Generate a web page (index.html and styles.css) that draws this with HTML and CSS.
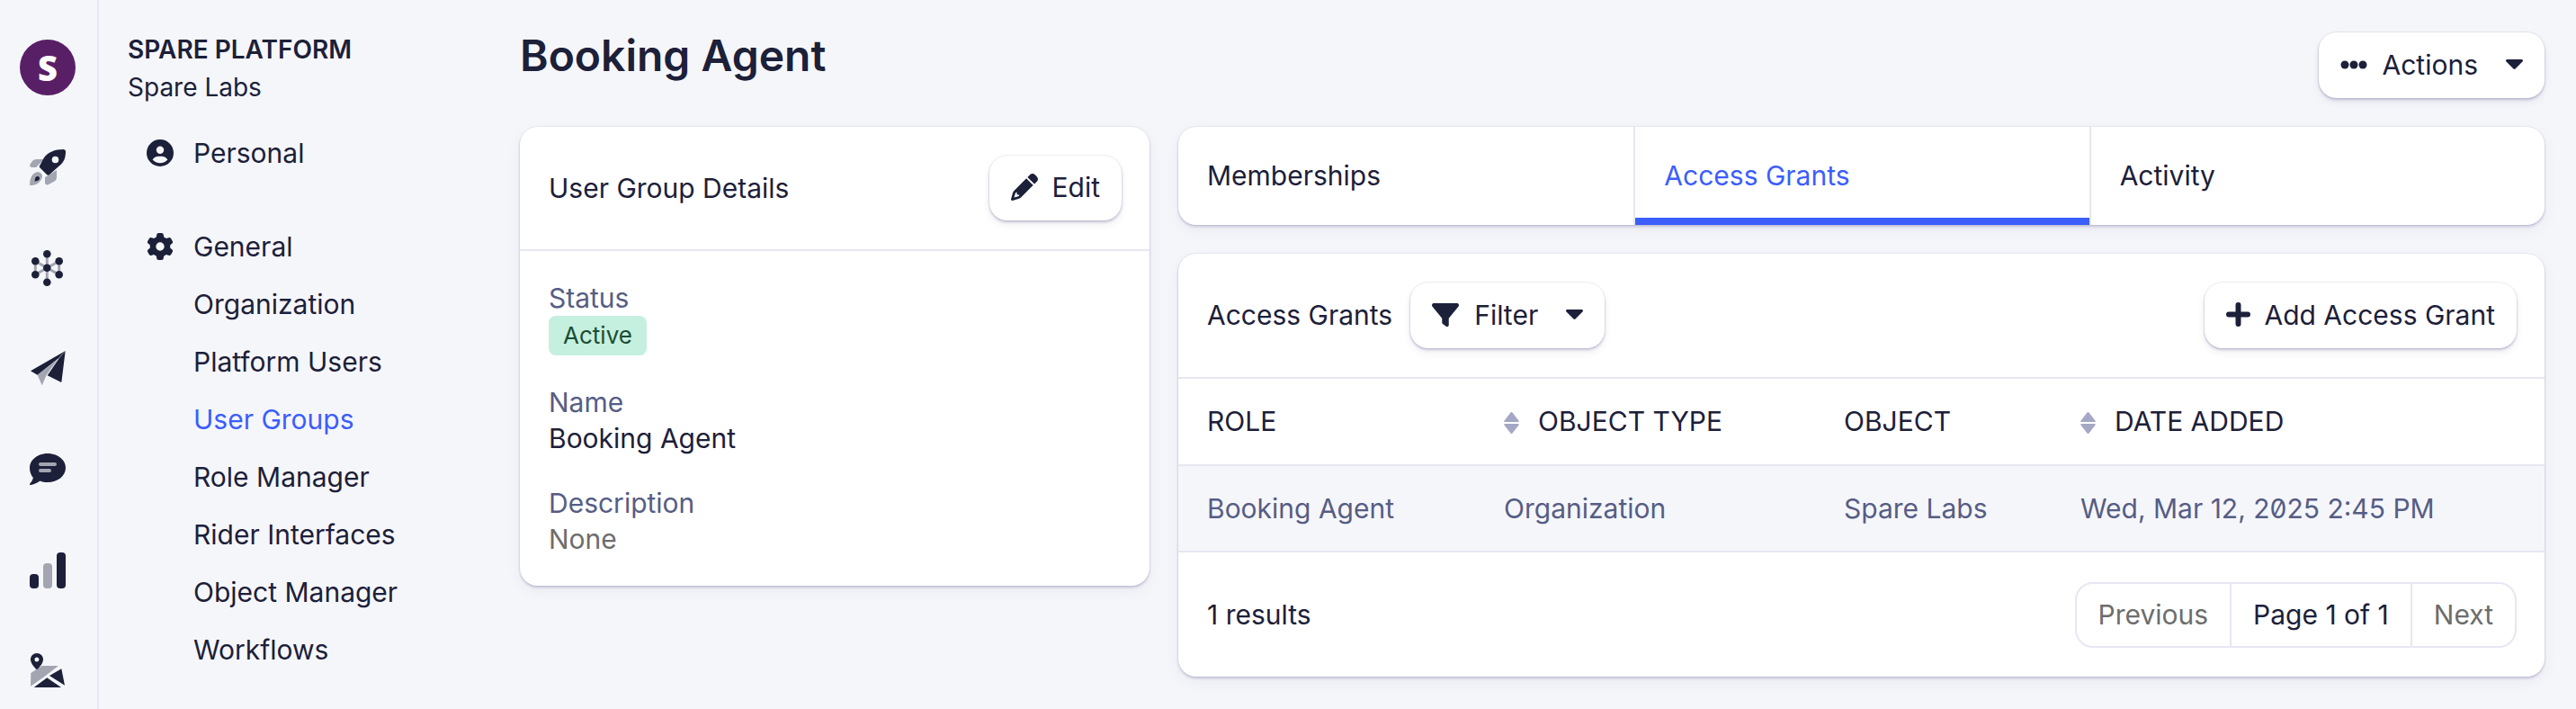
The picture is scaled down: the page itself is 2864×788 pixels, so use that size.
FILE: index.html
```html
<!DOCTYPE html>
<html lang="en">
<head>
    <meta charset="UTF-8">
    <meta name="viewport" content="width=device-width, initial-scale=1.0">
    <title>Booking Agent</title>
    <link rel="stylesheet" href="styles.css">
</head>
<body>
    <nav class="rail">
        <div class="logo">S</div>
        <svg class="rail-icon" viewBox="0 0 40 40">
            <path class="duo" d="M8 11h8L7 20H2.500C.5 20-.5 18 .5 16.500L3 13c1-1.300 3-2 5-2zM30 23v8c0 2-1 3.500-2.500 4.500L21 39c-2 1-4 0-4-2v-6z"/>
            <path class="duo" d="M7 25.500c2-.5 4-.5 5.500 1s2 3.500 1 5.500c-1 3-3 5-5.500 6.500C5.500 39.500 2.500 40 1 40c-.6 0-1-.4-1-1 0-3 .5-5 1.500-7.500 1-3 3-5 5.500-6z"/>
            <path d="M7.200 30.500c1-.6 2.500-.6 3.300.3s.8 2-.1 3c-1 1-2.600 1.500-4.700 2 0-2 .3-4 1.500-5.300z"/>
            <path d="M37.500 0C39 0 40 1 40 2.500c0 5-1 10-5 14L22 28c-1 1-2 1-3 0l-7.500-7.500c-1-1-1-2 0-3L15.500 10C20 3 28 0 37.500 0z"/>
            <circle class="hole" cx="28.500" cy="11.500" r="3.800"/>
        </svg>
        <svg class="rail-icon" viewBox="0 0 40 40">
            <path class="duo-line" d="M19.300 4.300v31.400M6.300 12.300v15M32.700 12.300v15M6.300 12.300l13 7.400 13.400-7.400M6.300 27.300l13-7.600 13.400 7.600"/>
            <circle cx="19.300" cy="4.300" r="4.300"/>
            <circle cx="6.300" cy="12.300" r="4.300"/>
            <circle cx="32.700" cy="12.300" r="4.300"/>
            <circle cx="19.300" cy="19.700" r="4.300"/>
            <circle cx="6.300" cy="27.300" r="4.300"/>
            <circle cx="32.700" cy="27.300" r="4.300"/>
            <circle cx="19.300" cy="35.700" r="4.300"/>
        </svg>
        <svg class="rail-icon" viewBox="0 0 40 40">
            <path d="M39.700 0L1 22.300l7.700 4.400L32 8.300z"/>
            <path class="duo" d="M8.700 26.700L32 8.300 18.700 26.700 13.700 38.300z"/>
            <path d="M32.700 8.300L39.700 0 35.300 35 19.700 27.300z"/>
        </svg>
        <svg class="rail-icon" viewBox="0 0 40 40">
            <path d="M20 2c11 0 20 7 20 16s-9 16-20 16c-3 0-6-.5-8.500-1.600C8 35 4 36.500 1 37c-1 .2-1.300-.8-.7-1.400 1.700-2 3-4.200 3.600-6.600C1.500 26.200 0 22.300 0 18 0 9 9 2 20 2z"/>
            <path class="duo-bar" d="M12 14h16M12 21h10"/>
        </svg>
        <svg class="rail-icon" viewBox="0 0 40 40">
            <rect width="10" height="16" y="24" rx="4"/>
            <rect class="duo" x="15" width="10" height="28" y="12" rx="4"/>
            <rect x="30" width="10" height="40" rx="4"/>
        </svg>
        <svg class="rail-icon" viewBox="0 0 40 40">
            <path class="duo" d="M13.700 14H32L15 27 1 36.700 1.300 22z"/>
            <path d="M35.300 17.300L39 35.700 22 25z"/>
            <path d="M19.300 27.300L35 38H4.700z"/>
            <path fill-rule="evenodd" d="M8 0c4 0 7 3 7 7 0 3.500-3.500 8-6 10.500-.6.600-1.500.600-2 0C4.500 15 1 10.500 1 7c0-4 3-7 7-7zm0 4.500a2.500 2.500 0 1 0 0 5 2.500 2.500 0 0 0 0-5z"/>
        </svg>
    </nav>

    <aside class="sidenav">
        <div class="brand">SPARE PLATFORM</div>
        <div class="org">Spare Labs</div>
        <a class="nav-head nav-personal">
            <svg class="nav-icon" viewBox="0 0 512 512"><path d="M399 384.200C376.900 345.800 335.400 320 288 320H224c-47.400 0-88.900 25.800-111 64.200c35.200 39.200 86.200 63.800 143 63.800s107.800-24.700 143-63.800zM0 256a256 256 0 1 1 512 0A256 256 0 1 1 0 256zm256 16a72 72 0 1 0 0-144 72 72 0 1 0 0 144z"/></svg>
            Personal
        </a>
        <a class="nav-head nav-general">
            <svg class="nav-icon" viewBox="0 0 512 512"><path d="M495.900 166.600c3.200 8.700 .5 18.400-6.400 24.600l-43.300 39.400c1.100 8.300 1.700 16.800 1.700 25.400s-.6 17.100-1.700 25.400l43.300 39.400c6.900 6.200 9.600 15.900 6.400 24.600c-4.400 11.900-9.700 23.300-15.800 34.300l-4.700 8.100c-6.600 11-14 21.400-22.100 31.200c-5.900 7.200-15.700 9.600-24.500 6.800l-55.700-17.700c-13.400 10.300-28.200 18.900-44 25.400l-12.500 57.100c-2 9.100-9 16.300-18.200 17.800c-13.800 2.300-28 3.500-42.500 3.500s-28.700-1.200-42.500-3.500c-9.200-1.500-16.200-8.700-18.200-17.800l-12.500-57.100c-15.800-6.500-30.600-15.100-44-25.400L83.100 425.900c-8.800 2.800-18.600 .3-24.500-6.800c-8.100-9.800-15.500-20.200-22.100-31.200l-4.700-8.100c-6.100-11-11.400-22.400-15.800-34.300c-3.200-8.700-.5-18.400 6.400-24.600l43.300-39.400C64.600 273.100 64 264.600 64 256s.6-17.100 1.700-25.400L22.400 191.200c-6.900-6.200-9.600-15.900-6.400-24.600c4.400-11.900 9.700-23.300 15.800-34.300l4.700-8.100c6.600-11 14-21.400 22.100-31.200c5.900-7.200 15.700-9.600 24.500-6.800l55.700 17.700c13.400-10.300 28.200-18.900 44-25.400l12.500-57.100c2-9.100 9-16.300 18.200-17.800C227.300 1.200 241.500 0 256 0s28.700 1.200 42.500 3.500c9.200 1.500 16.200 8.700 18.200 17.800l12.500 57.100c15.800 6.500 30.600 15.100 44 25.400l55.700-17.700c8.800-2.800 18.600-.3 24.500 6.800c8.100 9.800 15.500 20.200 22.100 31.200l4.700 8.100c6.100 11 11.400 22.400 15.800 34.300zM256 336a80 80 0 1 0 0-160 80 80 0 1 0 0 160z"/></svg>
            General
        </a>
        <a class="nav-item">Organization</a>
        <a class="nav-item">Platform Users</a>
        <a class="nav-item active">User Groups</a>
        <a class="nav-item">Role Manager</a>
        <a class="nav-item">Rider Interfaces</a>
        <a class="nav-item">Object Manager</a>
        <a class="nav-item">Workflows</a>
    </aside>

    <main class="main">
        <header class="page-head">
            <h1>Booking Agent</h1>
            <button class="btn">
                <svg class="icon-dots" viewBox="0 0 30 12"><circle cx="5" cy="6" r="4.500"/><circle cx="15" cy="6" r="4.500"/><circle cx="25" cy="6" r="4.500"/></svg>
                Actions
                <svg class="caret" viewBox="0 0 19 11"><path d="M1.500 0h16c1.300 0 2 1.500 1 2.500L10.500 10.500c-.5.600-1.500.600-2 0L.5 2.500C-.5 1.500.2 0 1.500 0z"/></svg>
            </button>
        </header>

        <div class="columns">
            <section class="card details">
                <div class="details-head">
                    <span>User Group Details</span>
                    <button class="btn btn-edit">
                        <svg class="icon" viewBox="0 0 512 512"><path d="M410.300 231l11.300-11.300-33.900-33.900-62.100-62.100L291.700 89.800l-11.300 11.300-22.600 22.600L58.600 322.900c-10.400 10.400-18 23.300-22.200 37.400L1 480.700c-2.500 8.400-.2 17.500 6.100 23.700s15.300 8.500 23.700 6.100l120.300-35.400c14.100-4.200 27-11.800 37.400-22.200L387.700 253.700 410.300 231zM160 399.400l-9.100 22.700c-4 3.100-8.500 5.400-13.300 6.900L59.400 452l23-78.100c1.400-4.900 3.800-9.400 6.900-13.300l22.700-9.100v32c0 8.800 7.200 16 16 16h32zM362.700 18.700L348.300 33.200 325.700 55.800 314.300 67.100l33.900 33.900 62.100 62.100 33.900 33.900 11.300-11.300 22.600-22.600 14.500-14.500c25-25 25-65.500 0-90.500L453.300 18.700c-25-25-65.500-25-90.500 0z"/></svg>
                        Edit
                    </button>
                </div>
                <div class="details-body">
                    <div class="field">
                        <div class="field-label">Status</div>
                        <span class="badge">Active</span>
                    </div>
                    <div class="field">
                        <div class="field-label">Name</div>
                        <div>Booking Agent</div>
                    </div>
                    <div class="field">
                        <div class="field-label">Description</div>
                        <div class="muted">None</div>
                    </div>
                </div>
            </section>

            <div class="right">
                <div class="card tabs">
                    <a class="tab">Memberships</a>
                    <a class="tab active">Access Grants</a>
                    <a class="tab">Activity</a>
                </div>

                <section class="card">
                    <div class="toolbar">
                        <span class="toolbar-title">Access Grants</span>
                        <button class="btn">
                            <svg class="icon" viewBox="0 0 512 512"><path d="M3.900 54.900C10.500 40.900 24.500 32 40 32H472c15.500 0 29.500 8.900 36.100 22.900s4.600 30.500-5.200 42.500L320 320.900V448c0 12.100-6.800 23.200-17.700 28.600s-23.800 4.300-33.500-3l-64-48c-8.100-6-12.800-15.500-12.800-25.600V320.900L9 97.300C-.7 85.400-2.800 68.800 3.900 54.900z"/></svg>
                            Filter
                            <svg class="caret" viewBox="0 0 19 11"><path d="M1.500 0h16c1.300 0 2 1.500 1 2.500L10.500 10.500c-.5.600-1.500.600-2 0L.5 2.500C-.5 1.500.2 0 1.500 0z"/></svg>
                        </button>
                        <button class="btn add-btn">
                            <svg class="icon-plus" viewBox="0 0 27 27"><path d="M13.500 3v21M3 13.500h21"/></svg>
                            Add Access Grant
                        </button>
                    </div>

                    <table class="grants">
                        <thead>
                            <tr>
                                <th class="col-role">ROLE</th>
                                <th class="col-type"><svg class="sort" viewBox="0 0 17 24"><path d="M7.300 .7c.6-.9 1.800-.9 2.400 0L16.500 9.500c.6 .8 0 1.500-1 1.500h-14c-1 0-1.600-.7-1-1.500zM7.300 23.300c.6 .9 1.800 .9 2.400 0l6.800-8.800c.6-.8 0-1.500-1-1.500h-14c-1 0-1.600 .7-1 1.500z"/></svg>OBJECT TYPE</th>
                                <th class="col-object">OBJECT</th>
                                <th><svg class="sort" viewBox="0 0 17 24"><path d="M7.300 .7c.6-.9 1.800-.9 2.400 0L16.500 9.500c.6 .8 0 1.500-1 1.500h-14c-1 0-1.600-.7-1-1.500zM7.300 23.300c.6 .9 1.800 .9 2.400 0l6.800-8.800c.6-.8 0-1.500-1-1.500h-14c-1 0-1.600 .7-1 1.500z"/></svg>DATE ADDED</th>
                            </tr>
                        </thead>
                        <tbody>
                            <tr>
                                <td>Booking Agent</td>
                                <td>Organization</td>
                                <td>Spare Labs</td>
                                <td class="date">Wed, Mar 12, 2025 2:45 PM</td>
                            </tr>
                        </tbody>
                    </table>

                    <div class="table-foot">
                        <span>1 results</span>
                        <div class="pager">
                            <span class="page-cell muted">Previous</span>
                            <span class="page-cell">Page 1 of 1</span>
                            <span class="page-cell muted">Next</span>
                        </div>
                    </div>
                </section>
            </div>
        </div>
    </main>
</body>
</html>
```

FILE: styles.css
```css
* {
    box-sizing: border-box;
}
html, body {
    height: 100%;
}
body {
    margin: 0;
    display: flex;
    overflow: hidden;
    background-color: #f5f6fa;
    color: #1c2039;
    font-family: Inter, "Liberation Sans", sans-serif;
    font-size: 30px;
    line-height: 40px;
}
svg {
    fill: currentColor;
    flex-shrink: 0;
}

/* icon rail */
.rail {
    width: 110px;
    flex-shrink: 0;
    padding: 44px 0 0 33px;
    border-right: 2px solid #e6e7f2;
    display: flex;
    flex-direction: column;
    gap: 72px;
}
.logo {
    width: 62px;
    height: 62px;
    margin-left: -11px;
    margin-bottom: -12px;
    border-radius: 50%;
    background-color: #581f66;
    color: #fff;
    font-family: "Open Sans", sans-serif;
    font-size: 38px;
    font-weight: 800;
    line-height: 62px;
    text-align: center;
}
.rail-icon {
    width: 40px;
    height: 40px;
    overflow: visible;
}
.duo {
    fill: #a3a5b0;
}
.duo-line {
    fill: none;
    stroke: #a3a5b0;
    stroke-width: 3;
}
.duo-bar {
    fill: none;
    stroke: #a3a5b0;
    stroke-width: 4;
    stroke-linecap: round;
}
.hole {
    fill: #f5f6fa;
}

/* section nav */
.sidenav {
    width: 468px;
    flex-shrink: 0;
    padding: 35px 0 0 32px;
    display: flex;
    flex-direction: column;
}
.brand {
    font-size: 28px;
    font-weight: 600;
}
.org {
    margin-top: 2px;
    font-size: 28px;
}
.nav-head {
    display: flex;
    align-items: center;
    gap: 22px;
    margin-left: 21px;
    height: 64px;
}
.nav-personal {
    margin-top: 21px;
}
.nav-general {
    margin-top: 40px;
}
.nav-icon {
    width: 30px;
    height: 30px;
}
.nav-item {
    margin-left: 73px;
    line-height: 64px;
}
.nav-item.active {
    color: #3b5efc;
}

/* page */
.main {
    flex: 1;
    padding: 36px 35px 0 0;
}
.page-head {
    display: flex;
    justify-content: space-between;
    align-items: flex-start;
    margin-bottom: 32px;
}
h1 {
    margin: 0;
    font-size: 48px;
    font-weight: 600;
    line-height: 52px;
}
.columns {
    display: flex;
    align-items: flex-start;
    gap: 32px;
}
.card {
    background-color: #fff;
    border-radius: 20px;
    box-shadow: 0 0 0 1px rgba(40, 40, 100, 0.05), 0 2px 3px rgba(60, 50, 120, 0.22), 0 6px 16px rgba(60, 50, 120, 0.06);
}
.btn {
    display: inline-flex;
    align-items: center;
    height: 73px;
    padding: 0 24px 2px;
    border: none;
    border-radius: 20px;
    background-color: #fff;
    color: inherit;
    font: inherit;
    box-shadow: 0 0 0 1px rgba(40, 40, 100, 0.06), 0 2px 3px rgba(60, 50, 120, 0.25), 0 5px 10px rgba(60, 50, 120, 0.07);
}
.btn-edit {
    height: 72px;
}
.btn-edit .icon {
    margin-right: 16px;
}
.icon {
    width: 30px;
    height: 30px;
    margin-right: 17px;
}
.icon-dots {
    width: 30px;
    height: 12px;
    margin-right: 17px;
}
.icon-plus {
    width: 27px;
    height: 27px;
    margin-right: 15px;
    fill: none;
    stroke: currentColor;
    stroke-width: 6;
    stroke-linecap: round;
}
.caret {
    width: 19px;
    height: 11px;
    margin-left: 31px;
}

/* details card */
.details {
    width: 700px;
    flex-shrink: 0;
}
.details-head {
    display: flex;
    justify-content: space-between;
    align-items: center;
    padding: 32px 31px 32px 32px;
    border-bottom: 2px solid #e6e7f2;
}
.details-head span {
    margin-top: -1px;
}
.details-body {
    padding: 32px;
    display: flex;
    flex-direction: column;
    gap: 32px;
}
.field-label {
    color: #565d85;
}
.badge {
    display: block;
    width: 109px;
    height: 44px;
    border-radius: 8px;
    background-color: #c5efdf;
    color: #1a4d33;
    font-size: 26px;
    line-height: 44px;
    text-align: center;
}
.muted {
    color: #6d6d6d;
}

/* tabs */
.right {
    flex: 1;
    display: flex;
    flex-direction: column;
    gap: 32px;
}
.tabs {
    display: grid;
    grid-template-columns: 1fr 1fr 1fr;
    height: 109px;
    overflow: hidden;
}
.tab {
    display: flex;
    align-items: center;
    padding: 0 0 1px 32px;
}
.tab + .tab {
    border-left: 2px solid #e6e7f2;
}
.tab.active {
    color: #3b5efc;
    box-shadow: inset 0 -8px 0 #3b5efc;
}

/* grants table */
.toolbar {
    display: flex;
    align-items: center;
    gap: 20px;
    padding: 32px 31px 32px 32px;
}
.toolbar-title {
    margin-top: -2px;
}
.add-btn {
    margin-left: auto;
}
.grants {
    width: 100%;
    border-collapse: collapse;
}
.grants th, .grants td {
    height: 96px;
    padding: 0 0 0 32px;
    border-top: 2px solid #e6e7f2;
    text-align: left;
    font-weight: 400;
}
.grants th {
    height: 97px;
    padding-bottom: 2px;
}
.grants th + th, .grants td + td {
    padding-left: 0;
}
.grants td {
    background-color: #f5f6fa;
    border-bottom: 2px solid #e6e7f2;
    color: #565d85;
}
.col-role {
    width: 362px;
}
.col-type {
    width: 378px;
}
.col-object {
    width: 263px;
}
.sort {
    width: 17px;
    height: 24px;
    margin-right: 21px;
    fill: #a4a8c4;
    vertical-align: -3px;
}
.date {
    font-feature-settings: "zero";
}
.table-foot {
    display: flex;
    justify-content: space-between;
    align-items: center;
    height: 138px;
    padding: 0 31px 0 32px;
}
.pager {
    display: flex;
    height: 73px;
    border: 2px solid #e6e7f2;
    border-radius: 20px;
}
.page-cell {
    display: flex;
    align-items: center;
    padding: 0 24px;
}
.page-cell + .page-cell {
    border-left: 2px solid #e6e7f2;
}
```
